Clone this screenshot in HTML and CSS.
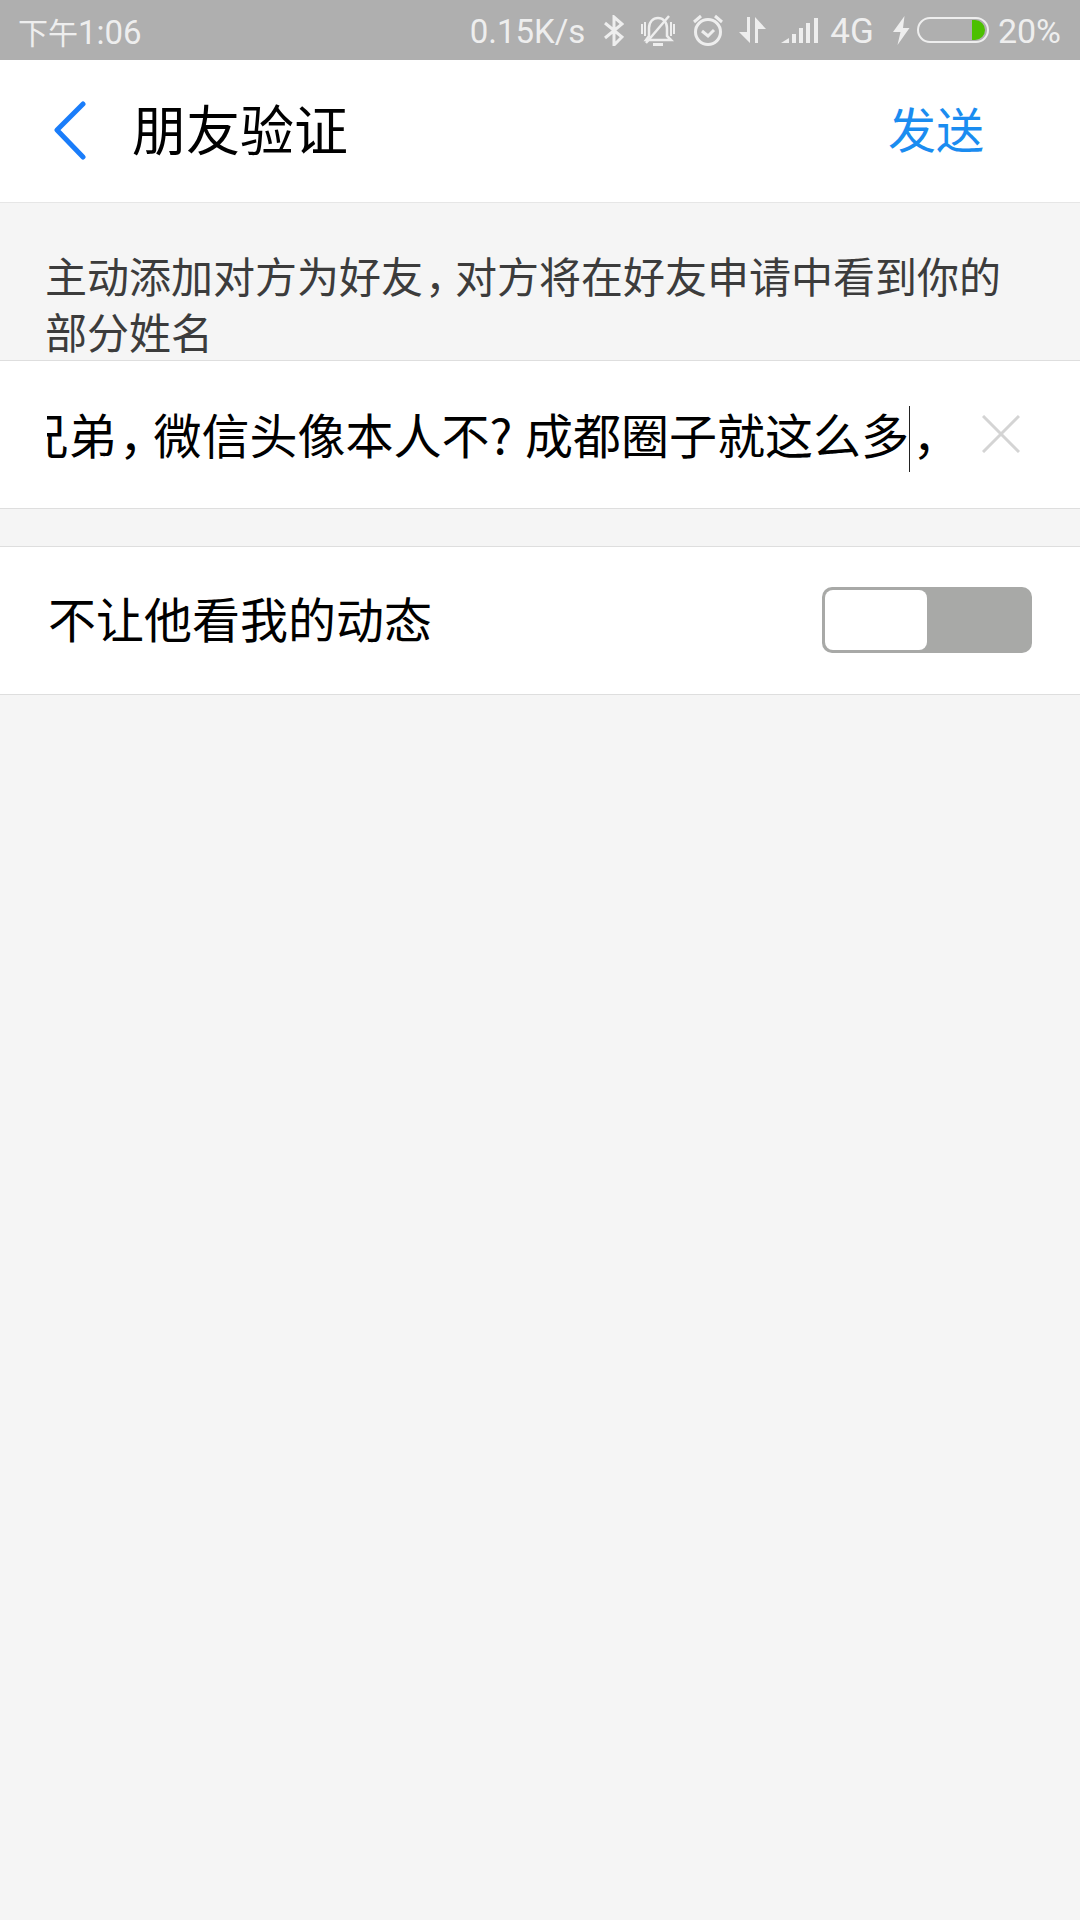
FILE: index.html
```html
<!DOCTYPE html>
<html lang="zh-CN">
<head>
    <meta charset="UTF-8">
    <title>朋友验证</title>
    <link rel="stylesheet" href="styles.css">
</head>
<body>
    <div class="status-bar">
        <span class="status-time"><span class="status-cjk">下午</span>1:06</span>
        <div class="status-right">
            <span class="status-speed">0.15K/s</span>
            <svg class="ic-bt" width="20" height="31" viewBox="0 0 20 31" fill="none" stroke="#eee" stroke-width="3">
                <path d="M1 8 L18 22 L10 30 L10 2 L18 9 L1 23"/>
            </svg>
            <svg class="ic-bell" width="34" height="31" viewBox="0 0 34 31" fill="none" stroke="#eee">
                <path d="M8 21 V13 C8 7 12 3 17 3 C22 3 26 7 26 13 V21 L30 25 H5 Z" stroke-width="2.5"/>
                <path d="M12 29.5 H22" stroke-width="3"/>
                <path d="M5 28 L28 1" stroke-width="2.5"/>
                <path d="M1 9 V19 M4 7 V21 M30 7 V21 M33 9 V19" stroke-width="2"/>
            </svg>
            <svg class="ic-alarm" width="32" height="32" viewBox="0 0 32 32" fill="none" stroke="#eee" stroke-width="3">
                <circle cx="16" cy="18" r="12.5"/>
                <path d="M10 17 L16 22 L22 16"/>
                <path d="M2 8 L9 2 M30 8 L23 2"/>
            </svg>
            <svg class="ic-arrows" width="27" height="26" viewBox="0 0 27 26" fill="#eee">
                <path d="M8 0 H11 V26 L0 15 H8 Z"/>
                <path d="M16 0 L27 12 H19 V26 H16 Z"/>
            </svg>
            <svg class="ic-signal" width="37" height="25" viewBox="0 0 37 25" fill="#eee">
                <path d="M0 25 L8 20 V25 Z"/>
                <rect x="11" y="16" width="4" height="9"/>
                <rect x="18" y="10" width="4" height="15"/>
                <rect x="25" y="5" width="4" height="20"/>
                <rect x="33" y="0" width="4" height="25"/>
            </svg>
            <span class="status-net">4G</span>
            <svg class="ic-bolt" width="17" height="29" viewBox="0 0 17 29" fill="#eee">
                <path d="M11.5 0 L0 16 H7.5 L4.5 29 L16.5 12 H10 Z"/>
            </svg>
            <div class="battery"><div class="battery-fill"></div></div>
            <span class="status-pct">20%</span>
        </div>
    </div>

    <div class="nav">
        <svg class="back" width="36" height="60" viewBox="0 0 36 60" fill="none" stroke="#1a7dfa" stroke-width="5" stroke-linecap="round" stroke-linejoin="round">
            <path d="M31 3 L5 29 L31 56"/>
        </svg>
        <span class="nav-title">朋友验证</span>
        <span class="nav-send">发送</span>
    </div>

    <p class="hint">主动添加对方为好友<span class="comma">，</span>对方将在好友申请中看到你的部分姓名</p>

    <div class="row input-row">
        <div class="input-clip">
            <span class="input-text">兄弟<span class="comma">，</span>微信头像本人不? 成都圈子就这么多<i class="caret"></i><span class="comma">，</span></span>
        </div>
        <svg class="clear" width="38" height="38" viewBox="0 0 38 38" stroke="#d4d4d4" stroke-width="3">
            <path d="M1 1 L37 37 M37 1 L1 37"/>
        </svg>
    </div>

    <div class="row switch-row">
        <span class="row-label">不让他看我的动态</span>
        <div class="switch"><div class="switch-knob"></div></div>
    </div>
</body>
</html>
```

FILE: styles.css
```css
body {
    margin: 0;
    width: 1080px;
    height: 1920px;
    overflow: hidden;
    background: #f5f5f5;
    font-family: "Noto Sans CJK SC", Roboto, sans-serif;
}
.status-bar {
    height: 60px;
    background: #afafaf;
    color: #eee;
    font-family: Roboto, "Noto Sans CJK SC", sans-serif;
    font-size: 33px;
    display: flex;
    align-items: center;
    justify-content: space-between;
    padding: 0 19px 0 18px;
    box-sizing: border-box;
}
.status-time, .status-speed, .status-net, .status-pct {
    padding-top: 2px;
}
.status-cjk {
    font-size: 30px;
}
.status-right {
    display: flex;
    align-items: center;
}
.status-speed {
    margin-right: 19px;
}
.ic-bt {
    margin-right: 17px;
}
.ic-bell {
    margin-right: 17px;
}
.ic-alarm {
    margin-right: 15px;
}
.ic-arrows {
    margin-right: 15px;
}
.ic-signal {
    margin-right: 12px;
}
.status-net {
    font-size: 35px;
    margin-right: 19px;
}
.ic-bolt {
    margin-right: 7px;
}
.battery {
    width: 72px;
    height: 26px;
    box-sizing: border-box;
    border: 2px solid #eee;
    border-radius: 13px;
    padding: 1px 2px;
    display: flex;
    justify-content: flex-end;
    margin-right: 9px;
}
.battery-fill {
    width: 13px;
    background: #4cc000;
    border-radius: 0 10px 10px 0;
}
.status-pct {
    font-size: 34px;
}
.nav {
    height: 142px;
    background: #fff;
    border-bottom: 1px solid #e6e6e6;
    display: flex;
    align-items: center;
    padding: 0 96px 0 52px;
}
.back {
    margin-right: 44px;
}
.nav-title {
    font-size: 54px;
    color: #000;
    flex: 1;
    padding-bottom: 8px;
}
.nav-send {
    font-size: 48px;
    color: #1a8cf0;
    padding-bottom: 8px;
}
.hint {
    margin: 0;
    height: 157px;
    box-sizing: border-box;
    padding: 44px 46px 0 45px;
    font-size: 42px;
    line-height: 56px;
    color: #3c3c3c;
    overflow: hidden;
}
.comma {
    margin-left: 0.05em;
    letter-spacing: -0.29em;
}
.row {
    background: #fff;
    border-top: 1px solid #dedede;
    border-bottom: 1px solid #dedede;
    height: 149px;
    box-sizing: border-box;
    display: flex;
    align-items: center;
}
.input-row {
    margin-bottom: 37px;
    padding: 0 60px 0 47px;
}
.input-clip {
    flex: 1;
    overflow: hidden;
    display: flex;
    justify-content: flex-end;
    white-space: nowrap;
    margin-right: 35px;
}
.input-text {
    font-size: 48px;
    color: #000;
    word-spacing: 2px;
    line-height: 70px;
}
.input-text .comma {
    letter-spacing: -0.28em;
}
.caret {
    display: inline-block;
    width: 1px;
    height: 66px;
    background: #222;
    vertical-align: -18px;
}
.clear {
    margin-bottom: 2px;
}
.switch-row {
    justify-content: space-between;
    padding: 0 48px;
}
.row-label {
    font-size: 48px;
    color: #000;
    padding-bottom: 8px;
}
.switch {
    width: 210px;
    height: 66px;
    box-sizing: border-box;
    background: #a8a9a7;
    border-radius: 10px;
    padding: 3px;
    margin-bottom: 2px;
}
.switch-knob {
    width: 102px;
    height: 60px;
    background: #fff;
    border-radius: 8px;
}
```
